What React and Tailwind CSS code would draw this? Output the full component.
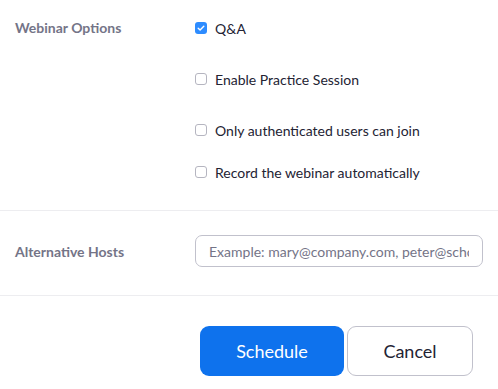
import { useState } from "react";

const options = [
  { label: "Q&A", checked: true, gap: "mt-0" },
  { label: "Enable Practice Session", checked: false, gap: "mt-[31px]" },
  { label: "Only authenticated users can join", checked: false, gap: "mt-[31px]" },
  { label: "Record the webinar automatically", checked: false, gap: "mt-[22px]" },
];

function Box({ checked, onClick }) {
  return (
    <span
      onClick={onClick}
      className={
        checked
          ? "w-3 h-3 rounded-[3px] bg-[#2d8cff] flex items-center justify-center shrink-0"
          : "w-3 h-3 rounded-[3px] border border-[#b5b5c0] bg-white shrink-0"
      }
    >
      {checked && (
        <svg viewBox="0 0 12 12" className="w-3 h-3">
          <path d="M3.2 6.2 L5.1 8 L8.8 4.2" fill="none" stroke="white" strokeWidth="1.4" strokeLinecap="round" strokeLinejoin="round" />
        </svg>
      )}
    </span>
  );
}

export default function App() {
  const [checks, setChecks] = useState(options.map((o) => o.checked));

  return (
    <div className="w-[498px] h-[389px] bg-white font-['Lato','Noto_Sans',sans-serif] overflow-hidden">
      {/* Webinar options */}
      <div className="flex pt-[18px] pb-[28px]">
        <div className="w-[195px] pl-[15px] text-[14px] leading-5 font-bold text-[#747487]">Webinar Options</div>
        <div className="flex flex-col">
          {options.map((o, i) => (
            <label key={o.label} className={`flex items-center gap-2 h-5 text-[14px] text-[#232333] ${o.gap}`}>
              <Box checked={checks[i]} onClick={() => setChecks(checks.map((c, j) => (j === i ? !c : c)))} />
              {o.label}
            </label>
          ))}
        </div>
      </div>

      <div className="h-px bg-[#ededf0]" />

      {/* Alternative hosts */}
      <div className="flex items-center pt-6 pb-7">
        <div className="w-[195px] pl-[15px] text-[14px] font-bold text-[#747487]">Alternative Hosts</div>
        <input
          placeholder="Example: mary@company.com, peter@school.edu"
          className="w-[288px] h-8 px-[13px] rounded-[7px] border border-[#c1c1cc] text-[14px] text-[#232333] placeholder:text-[#747487] outline-none"
        />
      </div>

      <div className="h-px bg-[#ededf0]" />

      <div className="flex pt-[30px] pl-[200px] gap-[3px]">
        <button className="w-[144px] h-[50px] rounded-[9px] bg-[#0e72ed] text-white text-[18px]">Schedule</button>
        <button className="w-[126px] h-[50px] rounded-[9px] border border-[#c1c1cc] bg-white text-[#232333] text-[18px]">Cancel</button>
      </div>
    </div>
  );
}
